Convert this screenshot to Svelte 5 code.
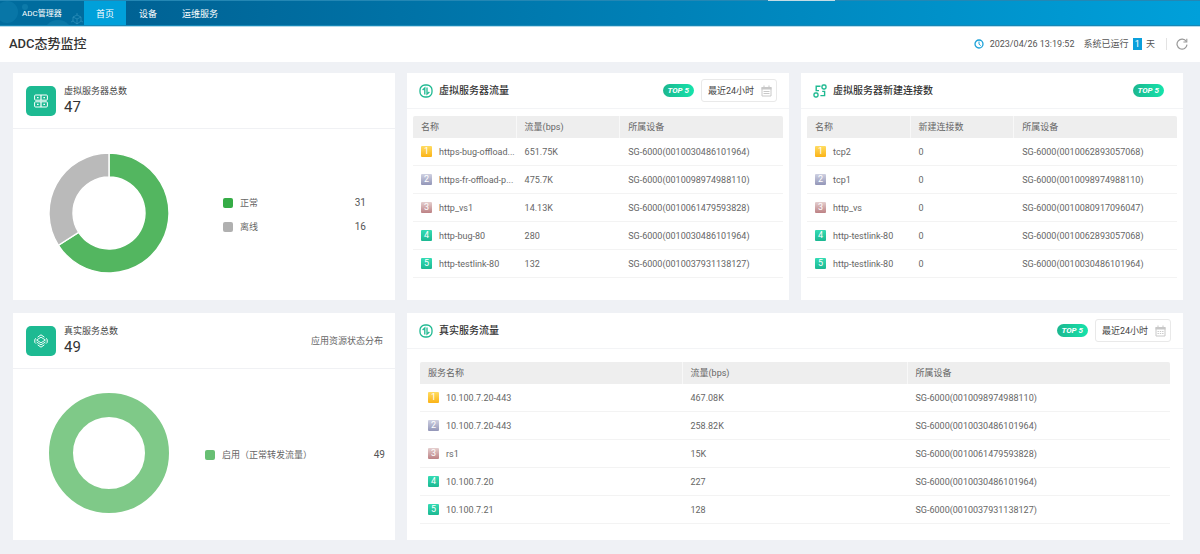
<script>
  const navItems = ['首页', '设备', '运维服务'];
  let active = $state('首页');
  let vsRange = $state('最近24小时');
  let rsRange = $state('最近24小时');

  const vsTraffic = [
    ['https-bug-offload...', '651.75K', 'SG-6000(0010030486101964)'],
    ['https-fr-offload-p...', '475.7K', 'SG-6000(0010098974988110)'],
    ['http_vs1', '14.13K', 'SG-6000(0010061479593828)'],
    ['http-bug-80', '280', 'SG-6000(0010030486101964)'],
    ['http-testlink-80', '132', 'SG-6000(0010037931138127)'],
  ];

  const vsConnections = [
    ['tcp2', '0', 'SG-6000(0010062893057068)'],
    ['tcp1', '0', 'SG-6000(0010098974988110)'],
    ['http_vs', '0', 'SG-6000(0010080917096047)'],
    ['http-testlink-80', '0', 'SG-6000(0010062893057068)'],
    ['http-testlink-80', '0', 'SG-6000(0010030486101964)'],
  ];

  const rsTraffic = [
    ['10.100.7.20-443', '467.08K', 'SG-6000(0010098974988110)'],
    ['10.100.7.20-443', '258.82K', 'SG-6000(0010030486101964)'],
    ['rs1', '15K', 'SG-6000(0010061479593828)'],
    ['10.100.7.20', '227', 'SG-6000(0010030486101964)'],
    ['10.100.7.21', '128', 'SG-6000(0010037931138127)'],
  ];

  const vsStatus = [
    { name: '正常', value: 31, color: '#53b660', mark: '#35ac46' },
    { name: '离线', value: 16, color: '#bababa', mark: '#b0b0b0' },
  ];
  const rsStatus = [
    { name: '启用（正常转发流量）', value: 49, color: '#7fc988', mark: '#68bf73' },
  ];

  function point(r, turn) {
    const a = turn * Math.PI * 2;
    return `${60 + r * Math.sin(a)} ${60 - r * Math.cos(a)}`;
  }

  // ring segments, clockwise from the top
  function slices(items) {
    const total = items.reduce((sum, i) => sum + i.value, 0);
    let start = 0;
    return items.map((item) => {
      const end = start + item.value / total;
      const large = end - start > 0.5 ? 1 : 0;
      const d = `M${point(60, start)} A60 60 0 ${large} 1 ${point(60, end)} L${point(36, end)} A36 36 0 ${large} 0 ${point(36, start)}Z`;
      start = end;
      return { d, color: item.color };
    });
  }
</script>

{#snippet trafficIcon()}
  <svg class="title-icon" viewBox="0 0 14 14" fill="none" stroke="#1fb991" aria-hidden="true">
    <rect x="1" y="1" width="12" height="12" rx="5" stroke-width="1.3" />
    <path d="M3.6 6 L5.8 4 V10.4 M8 3.6 V10 L10.4 8" stroke-width="1.3" />
  </svg>
{/snippet}

{#snippet connectionIcon()}
  <svg class="title-icon" viewBox="0 0 14 14" fill="none" stroke="#1fb991" stroke-width="1.4" aria-hidden="true">
    <rect x="9" y="1" width="4" height="4" rx="1.4" />
    <rect x="1" y="9" width="4" height="4" rx="1.4" />
    <path d="M7.5 2.2 H3.2 V6.6 H6 M11.6 6.8 V11.6 H7.4 M9.2 7.4 H11.6" />
  </svg>
{/snippet}

{#snippet donut(items, label)}
  <svg class="donut" viewBox="0 0 120 120" role="img" aria-label={label}>
    {#if items.length === 1}
      <circle cx="60" cy="60" r="48" fill="none" stroke={items[0].color} stroke-width="24" />
    {:else}
      {#each slices(items) as slice}
        <path d={slice.d} fill={slice.color} stroke="#fff" stroke-width="1.4" />
      {/each}
    {/if}
  </svg>
{/snippet}

{#snippet legend(items)}
  <ul class="legend">
    {#each items as item}
      <li>
        <span class="mark" style="background: {item.mark}"></span>
        <span class="legend-name">{item.name}</span>
        <span class="legend-value">{item.value}</span>
      </li>
    {/each}
  </ul>
{/snippet}

{#snippet calendar(detailed)}
  <svg class="calendar" viewBox="0 0 11 12" aria-hidden="true">
    <path d="M1 2.5h9v8.5H1z" fill="#fff" stroke="#c8c8c8" />
    <path d="M.5 2h10v2.5H.5zM2.5.5h1V3h-1zM7.5.5h1V3h-1z" fill="#c8c8c8" />
    <path d="M2.5 6.5h6M2.5 8.5h6" stroke="#c8c8c8" stroke-dasharray={detailed ? '1.4 .9' : 'none'} />
  </svg>
{/snippet}

{#snippet ranking(heads, rows)}
  <table>
    <thead>
      <tr>
        {#each heads as head}
          <th scope="col">{head}</th>
        {/each}
      </tr>
    </thead>
    <tbody>
      {#each rows as [name, value, device], i}
        <tr>
          <td>
            <div class="name-cell">
              <span class="rank rank-{i + 1}">{i + 1}</span>
              <span class="name">{name}</span>
            </div>
          </td>
          <td>{value}</td>
          <td>{device}</td>
        </tr>
      {/each}
    </tbody>
  </table>
{/snippet}

<div class="app">
  <nav>
    <div class="brand">
      <svg class="brand-art" viewBox="0 0 84 26" aria-hidden="true">
        <circle cx="7" cy="11" r="11" fill="#0f7fae" opacity=".55" />
        <circle cx="25" cy="6" r="3" fill="#1583b0" opacity=".6" />
        <circle cx="58" cy="34" r="15" fill="#1280ae" opacity=".6" />
        <path
          d="M73 16l4-2 4 2v4l-4 3-4-3zM77 14v-2M73 16l4 2 4-2M77 18v5M71 21l2-1M81 20l2 1"
          fill="none"
          stroke="#3d9cc4"
          stroke-width=".8"
          opacity=".7"
        />
      </svg>
      <span>ADC管理器</span>
    </div>
    <div class="nav-items">
      {#each navItems as item}
        <button type="button" class="nav-item" class:active={active === item} onclick={() => (active = item)}>{item}</button>
      {/each}
    </div>
    <span class="handle"></span>
  </nav>

  <header>
    <h1>ADC态势监控</h1>
    <div class="status">
      <svg class="clock" viewBox="0 0 10 10" fill="none" stroke="#1ba1d8" aria-hidden="true">
        <circle cx="5" cy="5" r="4" stroke-width="1.3" />
        <path d="M5 2.5V5.2L6.7 6.6" />
      </svg>
      <time>2023/04/26 13:19:52</time>
      <span class="uptime">系统已运行 <b>1</b> 天</span>
      <button type="button" class="refresh" aria-label="刷新">
        <svg viewBox="0 0 12 12" fill="none" stroke="#999" aria-hidden="true">
          <path d="M10.3 3.5A5 5 0 1 0 11 6.6" stroke-width="1.2" />
          <path d="M10.8.8V4H7.4" stroke-width="1.1" />
        </svg>
      </button>
    </div>
  </header>

  <main>
    <section class="card">
      <div class="summary">
        <span class="tile">
          <svg viewBox="0 0 14 14" fill="none" stroke="#fff" aria-hidden="true">
            <rect x=".6" y="1" width="12.8" height="5.2" rx="1" />
            <rect x=".6" y="7.8" width="12.8" height="5.2" rx="1" />
            <path d="M7 1v5.2M7 7.8V13M3 3.6h1.6M9.4 3.6H11M3 10.4h1.6M9.4 10.4H11" stroke-width="1.2" />
          </svg>
        </span>
        <div>
          <h2>虚拟服务器总数</h2>
          <strong>47</strong>
        </div>
      </div>
      <div class="chart">
        {@render donut(vsStatus, '虚拟服务器总数')}
        {@render legend(vsStatus)}
      </div>
    </section>

    <section class="card">
      <div class="card-head">
        {@render trafficIcon()}
        <h2>虚拟服务器流量</h2>
        <span class="top">TOP 5</span>
        <div class="range">
          <select aria-label="时间范围" bind:value={vsRange}>
            <option>最近24小时</option>
          </select>
          {@render calendar(false)}
        </div>
      </div>
      <div class="table-wrap">
        {@render ranking(['名称', '流量(bps)', '所属设备'], vsTraffic)}
      </div>
    </section>

    <section class="card">
      <div class="card-head solo">
        {@render connectionIcon()}
        <h2>虚拟服务器新建连接数</h2>
        <span class="top">TOP 5</span>
      </div>
      <div class="table-wrap">
        {@render ranking(['名称', '新建连接数', '所属设备'], vsConnections)}
      </div>
    </section>

    <section class="card">
      <div class="summary">
        <span class="tile">
          <svg viewBox="0 0 14 14" fill="none" stroke="#fff" stroke-linejoin="round" aria-hidden="true">
            <path d="M3.6 3.2L7 .8l3.4 2.4M12 4.4L13.2 5.4v3L12 9.6M10.4 10.8L7 13.2 3.6 10.8M2 9.6L.8 8.4v-3L2 4.4" />
            <path d="M7 3.2L11.4 6 7 8.8 2.6 6zM2.6 8L7 10.8 11.4 8" stroke-width=".9" />
          </svg>
        </span>
        <div>
          <h2>真实服务总数</h2>
          <strong>49</strong>
        </div>
        <span class="note">应用资源状态分布</span>
      </div>
      <div class="chart single">
        {@render donut(rsStatus, '真实服务总数')}
        {@render legend(rsStatus)}
      </div>
    </section>

    <section class="card wide">
      <div class="card-head">
        {@render trafficIcon()}
        <h2>真实服务流量</h2>
        <span class="top">TOP 5</span>
        <div class="range">
          <select aria-label="时间范围" bind:value={rsRange}>
            <option>最近24小时</option>
          </select>
          {@render calendar(true)}
        </div>
      </div>
      <div class="table-wrap">
        {@render ranking(['服务名称', '流量(bps)', '所属设备'], rsTraffic)}
      </div>
    </section>
  </main>
</div>

<style>
  :global(body) {
    background: #eff1f5;
  }

  .app {
    font-family: Roboto, 'Noto Sans CJK SC', sans-serif;
    font-size: 9px;
    line-height: 12px;
    color: #666;
  }

  button,
  select {
    font: inherit;
    border: none;
    background: none;
    padding: 0;
    margin: 0;
  }

  h1,
  h2 {
    margin: 0;
    font-weight: 500;
  }

  nav {
    position: relative;
    display: flex;
    height: 26px;
    box-sizing: border-box;
    border-top: 1px solid #2487b4;
    border-bottom: 1px solid #1787b6;
    background: linear-gradient(90deg, #005b8c, #00a0da);
    box-shadow: 0 1px 0 #b5dcec;
    color: #fff;
  }

  .brand {
    position: relative;
    width: 84px;
    box-sizing: border-box;
    padding: 2px 0 0 22px;
    display: flex;
    align-items: center;
    font-size: 8px;
    background: #006c9e;
    overflow: hidden;
  }

  .brand span {
    position: relative;
  }

  .brand-art {
    position: absolute;
    left: 0;
    top: 0;
    width: 84px;
    height: 26px;
  }

  .nav-items {
    display: flex;
    gap: 1px;
  }

  .nav-item {
    padding: 2px 12px 0;
    color: #fff;
    cursor: pointer;
  }

  .nav-item.active {
    background: #00a0da;
  }

  .handle {
    position: absolute;
    top: -1px;
    left: 64%;
    width: 67px;
    height: 1px;
    background: #c4dce5;
  }

  header {
    display: flex;
    align-items: center;
    justify-content: space-between;
    height: 36px;
    padding: 0 12px 0 9px;
    background: #fff;
  }

  h1 {
    font-size: 13px;
    line-height: 18px;
    color: #333;
  }

  .status {
    display: flex;
    align-items: center;
    color: #555;
  }

  .clock {
    width: 10px;
    height: 10px;
    margin-right: 6px;
  }

  .uptime {
    margin-left: 9px;
  }

  .uptime b {
    display: inline-block;
    margin: 0 2px;
    padding: 0 2px;
    font-weight: 400;
    background: #0b9fdb;
    color: #fff;
  }

  .refresh {
    display: flex;
    margin-left: 11px;
    padding-left: 9px;
    border-left: 1px solid #e3e3e3;
    cursor: pointer;
  }

  .refresh svg {
    width: 12px;
    height: 12px;
  }

  main {
    display: grid;
    grid-template-columns: repeat(3, minmax(0, 1fr));
    gap: 13px 12px;
    padding: 11px 17px 14px 13px;
  }

  .card {
    display: flex;
    flex-direction: column;
    min-height: 227px;
    background: #fff;
  }

  .wide {
    grid-column: span 2;
  }

  .summary {
    display: flex;
    align-items: center;
    gap: 8px;
    height: 55px;
    padding: 0 12px 0 13px;
    border-bottom: 1px solid #f0f1f4;
  }

  .summary h2 {
    font-size: 9px;
    line-height: 12px;
    font-weight: 400;
    color: #444;
  }

  .summary strong {
    display: block;
    font-size: 15px;
    line-height: 20px;
    font-weight: 400;
    color: #333;
  }

  .tile {
    display: flex;
    align-items: center;
    justify-content: center;
    width: 30px;
    height: 30px;
    border-radius: 5px;
    background: #1dba92;
  }

  .tile svg {
    width: 14px;
    height: 14px;
  }

  .note {
    margin-left: auto;
  }

  .chart {
    flex: 1;
    display: flex;
    align-items: center;
    padding: 0 29px 0 36px;
  }

  .chart.single {
    padding-right: 10px;
  }

  .donut {
    width: 120px;
    height: 120px;
    margin-bottom: 3px;
  }

  .legend {
    flex: 1;
    margin: 0 0 0 54px;
    padding: 0;
    list-style: none;
  }

  .single .legend {
    margin-left: 36px;
  }

  .legend li {
    display: flex;
    align-items: center;
    height: 24px;
  }

  .mark {
    width: 10px;
    height: 10px;
    margin-right: 7px;
    border-radius: 2px;
  }

  .legend-value {
    margin-left: auto;
    font-size: 10px;
    color: #555;
  }

  .card-head {
    display: flex;
    align-items: center;
    height: 35px;
    padding: 0 12px;
    border-bottom: 1px solid #f3f4f6;
  }

  .card-head.solo {
    padding-right: 19px;
  }

  .title-icon {
    width: 14px;
    height: 14px;
    margin-right: 6px;
  }

  .card-head h2 {
    font-size: 10px;
    line-height: 14px;
    color: #333;
  }

  .top {
    margin-left: auto;
    padding: 0 5px;
    border-radius: 7px;
    background: linear-gradient(90deg, #1cb78f, #15e3ab);
    color: #fff;
    font-size: 8px;
    line-height: 13px;
    font-weight: 700;
    font-style: italic;
  }

  .range {
    position: relative;
    margin-left: 7px;
  }

  .range select {
    appearance: none;
    width: 76px;
    height: 23px;
    padding: 0 6px;
    border: 1px solid #e9e9e9;
    border-radius: 3px;
    background: #fff;
    color: #444;
  }

  .calendar {
    position: absolute;
    right: 5px;
    top: 6px;
    width: 11px;
    height: 12px;
    pointer-events: none;
  }

  .table-wrap {
    padding: 7px 6px;
  }

  .wide .table-wrap {
    padding: 13px 13px 16px;
  }

  table {
    width: 100%;
    table-layout: fixed;
    border-collapse: separate;
    border-spacing: 0;
  }

  th,
  td {
    box-sizing: border-box;
    padding: 0 0 0 8px;
    text-align: left;
  }

  th {
    width: 28%;
    height: 22px;
    font-weight: 400;
    background: #eee;
    border-right: 1px solid #f8f8f8;
  }

  .wide th {
    width: 35%;
  }

  .wide th:nth-child(2) {
    width: 30%;
  }

  th:last-child {
    width: auto;
    border-right: none;
    border-radius: 0 2px 0 0;
  }

  th:first-child {
    border-radius: 2px 0 0 0;
  }

  td {
    height: 28px;
    border-bottom: 1px solid #f3f3f3;
  }

  .name-cell {
    display: flex;
    align-items: center;
    gap: 7px;
  }

  .name {
    white-space: nowrap;
  }

  .rank {
    flex: none;
    width: 11px;
    height: 11px;
    border-radius: 1px;
    color: #fff;
    font-size: 9px;
    line-height: 11px;
    text-align: center;
    background: linear-gradient(#35dcb4, #1cb892);
  }

  .rank-1 {
    background: linear-gradient(#ffdc62, #fbb317);
  }

  .rank-2 {
    background: linear-gradient(#cfd1e2, #9396b8);
  }

  .rank-3 {
    background: linear-gradient(#e4cfcf, #bd8184);
  }
</style>
